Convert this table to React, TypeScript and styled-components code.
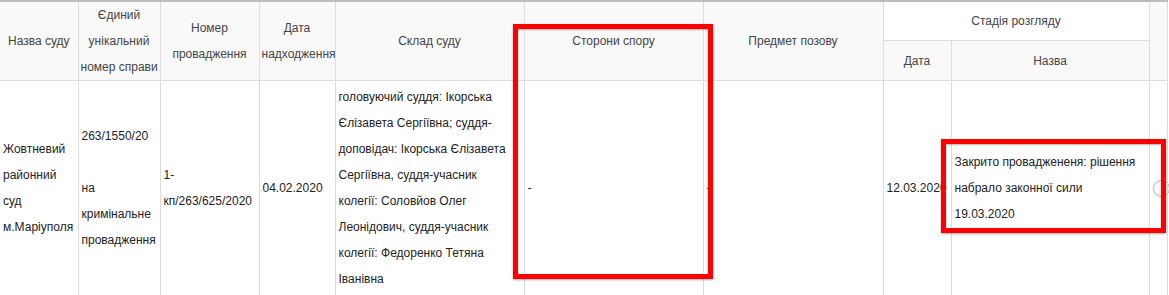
import styled, { createGlobalStyle } from 'styled-components';

const GlobalStyle = createGlobalStyle`
  html, body {
    margin: 0;
    padding: 0;
    background: #fff;
  }
  body {
    font-family: "Liberation Sans", Arial, Helvetica, sans-serif;
    font-size: 12px;
    color: #333;
  }
`;

const Page = styled.div`
  position: relative;
  width: 1169px;
  height: 295px;
  overflow: hidden;
`;

const Table = styled.table`
  border-collapse: collapse;
  table-layout: fixed;
  width: 1167px;
  border-top: 2px solid #bdbdbd;
`;

const HeadRow = styled.tr`
  height: 39px;
`;

const Th = styled.th<{ $white?: boolean; $first?: boolean }>`
  background: ${(p) => (p.$white ? '#fff' : '#f9f9f9')};
  border: 1px solid #ddd;
  border-top: none;
  ${(p) => p.$first && 'border-left: none;'}
  font-weight: normal;
  color: #444;
  line-height: 26px;
  padding: 0 2px;
  text-align: center;
  vertical-align: middle;
  white-space: nowrap;
`;

const Td = styled.td<{ $first?: boolean }>`
  border: 1px solid #ddd;
  ${(p) => p.$first && 'border-left: none;'}
  padding: 3px 3px;
  line-height: 26px;
  color: #222;
  vertical-align: middle;
  white-space: nowrap;
  text-align: left;
`;

const Radio = styled.span`
  display: block;
  width: 15px;
  height: 15px;
  border-radius: 50%;
  border: 1px solid #aaa;
  background: #fbfbfb;
`;

const Highlight = styled.div<{ $left: number; $top: number; $w: number; $h: number }>`
  position: absolute;
  left: ${(p) => p.$left}px;
  top: ${(p) => p.$top}px;
  width: ${(p) => p.$w}px;
  height: ${(p) => p.$h}px;
  box-sizing: border-box;
  border: 5px solid #ff0000;
  box-shadow: 0 1px 2px rgba(0, 0, 0, 0.35), inset 0 1px 2px rgba(0, 0, 0, 0.3);
  pointer-events: none;
`;

const widths = [78, 82, 99, 76, 189, 179, 180, 68, 198, 18];

export default function App() {
  return (
    <Page>
      <GlobalStyle />
      <Table>
        <colgroup>
          {widths.map((w, i) => (
            <col key={i} style={{ width: w }} />
          ))}
        </colgroup>
        <thead>
          <HeadRow>
            <Th rowSpan={2} $first>Назва суду</Th>
            <Th rowSpan={2}>
              Єдиний
              <br />
              унікальний
              <br />
              номер справи
            </Th>
            <Th rowSpan={2}>
              Номер
              <br />
              провадження
            </Th>
            <Th rowSpan={2}>
              Дата
              <br />
              надходження
            </Th>
            <Th rowSpan={2}>Склад суду</Th>
            <Th rowSpan={2}>Сторони спору</Th>
            <Th rowSpan={2}>Предмет позову</Th>
            <Th colSpan={2} $white>
              Стадія розгляду
            </Th>
            <Th rowSpan={2}></Th>
          </HeadRow>
          <HeadRow>
            <Th>Дата</Th>
            <Th>Назва</Th>
          </HeadRow>
        </thead>
        <tbody>
          <tr>
            <Td $first>
              Жовтневий
              <br />
              районний
              <br />
              суд
              <br />
              м.Маріуполя
            </Td>
            <Td>
              263/1550/20
              <br />
              <br />
              на
              <br />
              кримінальне
              <br />
              провадження
            </Td>
            <Td>
              1-
              <br />
              кп/263/625/2020
            </Td>
            <Td>04.02.2020</Td>
            <Td>
              головуючий суддя: Ікорська
              <br />
              Єлізавета Сергіївна; суддя-
              <br />
              доповідач: Ікорська Єлізавета
              <br />
              Сергіївна, суддя-учасник
              <br />
              колегії: Соловйов Олег
              <br />
              Леонідович, суддя-учасник
              <br />
              колегії: Федоренко Тетяна
              <br />
              Іванівна
            </Td>
            <Td>-</Td>
            <Td>-</Td>
            <Td>12.03.2020</Td>
            <Td>
              Закрито проваджененя: рішення
              <br />
              набрало законної сили
              <br />
              19.03.2020
            </Td>
            <Td>
              <Radio />
            </Td>
          </tr>
        </tbody>
      </Table>
      <Highlight $left={513} $top={24} $w={200} $h={255} />
      <Highlight $left={941} $top={139} $w={225} $h={94} />
    </Page>
  );
}
